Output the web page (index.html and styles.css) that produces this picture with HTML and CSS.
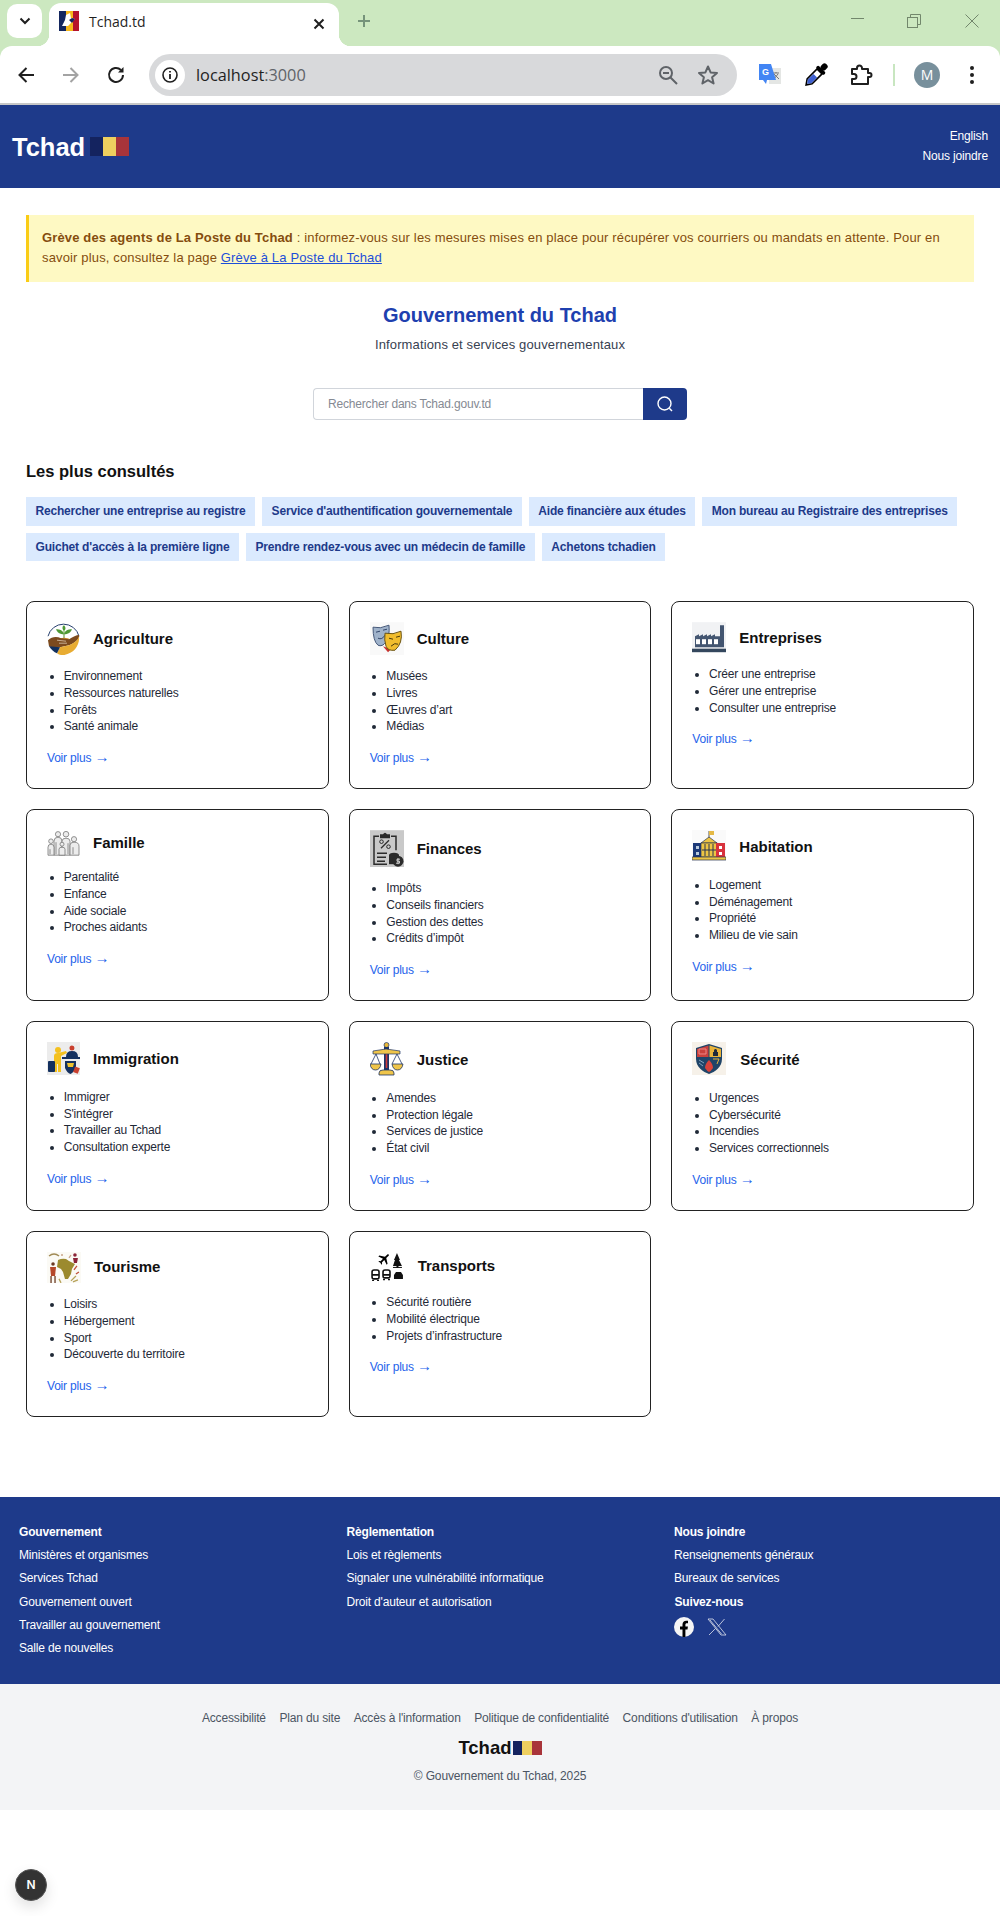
FILE: index.html
```html
<!DOCTYPE html>
<html lang="fr">
<head>
<meta charset="utf-8">
<title>Tchad.td</title>
<link rel="stylesheet" href="styles.css">
</head>
<body>
<div class="chrome">
  <div class="tabstrip">
    <div class="tabsearch"><svg width="14" height="10" viewBox="0 0 14 10"><path d="M2.500 2.500L7 7L11.500 2.500" fill="none" stroke="#1f1f1f" stroke-width="2"/></svg></div>
    <div class="tab">
      <svg class="favicon" width="20" height="20" viewBox="0 0 20 20"><rect width="7" height="20" fill="#14275f"/><rect x="7" width="7" height="20" fill="#f6b81c"/><rect x="14" width="6" height="20" fill="#b5122c"/><path d="M7 4L11 2L12 7L16 8L12 12L9 15L3 15L6 9Z" fill="#fff"/><path d="M10 9L13 7L16 8L13 12Z" fill="#14275f"/></svg>
      <span class="tabtitle">Tchad.td</span>
      <svg class="tabclose" width="12" height="12" viewBox="0 0 12 12"><path d="M1.500 1.500L10.500 10.500M10.500 1.500L1.500 10.500" stroke="#1f1f1f" stroke-width="2"/></svg>
    </div>
    <svg class="newtab" width="14" height="14" viewBox="0 0 14 14"><path d="M7 1V13M1 7H13" stroke="#75937a" stroke-width="2"/></svg>
    <svg class="winctl" width="130" height="16" viewBox="0 0 130 16"><g fill="none" stroke="#72876c" stroke-width="1"><path d="M1 5.500H14"/><rect x="57.500" y="4.500" width="10" height="10"/><path d="M60.500 4.500V1.500H70.500V11.500H67.500"/><path d="M115.500 1.500L128.500 14.500M128.500 1.500L115.500 14.500"/></g></svg>
  </div>
  <div class="toolbar">
    <svg class="tb" width="24" height="24" viewBox="0 0 24 24"><path d="M20 12H6M12.500 5L5.500 12L12.500 19" fill="none" stroke="#1f1f1f" stroke-width="2"/></svg>
    <svg class="tb" width="24" height="24" viewBox="0 0 24 24"><path d="M4 12H18M11.500 5L18.500 12L11.500 19" fill="none" stroke="#a3a3a3" stroke-width="2"/></svg>
    <svg class="tb" width="24" height="24" viewBox="0 0 24 24"><path d="M19 12A7 7 0 1 1 16.900 7" fill="none" stroke="#1f1f1f" stroke-width="2"/><path d="M19.500 4V9.500H14Z" fill="#1f1f1f"/></svg>
    <div class="omnibox">
      <div class="infobtn"><svg width="18" height="18" viewBox="0 0 18 18"><circle cx="9" cy="9" r="7" fill="none" stroke="#1f1f1f" stroke-width="1.600"/><path d="M9 8V13M9 5V6.600" stroke="#1f1f1f" stroke-width="1.800"/></svg></div>
      <span class="url">localhost<span class="port">:3000</span></span>
      <div class="omni-icons">
        <svg width="24" height="24" viewBox="0 0 24 24"><circle cx="10" cy="10" r="6" fill="none" stroke="#5f6368" stroke-width="2"/><path d="M14.500 14.500L21 21M7 10H13" stroke="#5f6368" stroke-width="2"/></svg>
        <svg width="24" height="24" viewBox="0 0 24 24"><path d="M12 3.500L14.600 9.400L21 10L16.100 14.200L17.600 20.500L12 17.200L6.400 20.500L7.900 14.200L3 10L9.400 9.400Z" fill="none" stroke="#5f6368" stroke-width="2" stroke-linejoin="round"/></svg>
      </div>
    </div>
    <svg class="ext-first" width="24" height="24" viewBox="0 0 24 24"><rect x="11" y="5" width="12" height="16" fill="#e4e6e4"/><path d="M15 10H21M18 9V10M16 16L20 11M16 11L21 16" stroke="#777" fill="none"/><path d="M1 1H13L18 17H9L8 21L5 17H1Z" fill="#4285f4"/><text class="gt" x="4" y="12">G</text></svg>
    <svg class="ext" width="24" height="24" viewBox="0 0 24 24"><g transform="rotate(45 12 12)"><rect x="9" y="-3" width="6" height="7" rx="2.500" fill="#000"/><rect x="6.500" y="3.500" width="11" height="3.500" rx="1.500" fill="#000"/><path d="M8.500 7H15.500V21L12 26L8.500 21Z" fill="#fff" stroke="#000" stroke-width="1.600"/><path d="M9.500 13H14.500V21L12 24.500L9.500 21Z" fill="#3d5fd0"/></g></svg>
    <svg class="ext2" width="24" height="24" viewBox="0 0 24 24"><path d="M3 6H8V5A2.500 2.500 0 0 1 13 5V6H19V10H20.500A2 2 0 0 1 20.500 14H19V21H3V16H5A2.500 2.500 0 0 0 5 11H3Z" fill="none" stroke="#1f1f1f" stroke-width="2" stroke-linejoin="round"/></svg>
    <span class="tbsep"></span>
    <span class="avatar">M</span>
    <svg class="kebab" width="24" height="24" viewBox="0 0 24 24"><circle cx="12" cy="5" r="2" fill="#1f1f1f"/><circle cx="12" cy="12" r="2" fill="#1f1f1f"/><circle cx="12" cy="19" r="2" fill="#1f1f1f"/></svg>
  </div>
</div>

<header class="site-header">
  <a class="logo" href="#"><span class="logo-text">Tchad</span><span class="flag"><i class="f1"></i><i class="f2"></i><i class="f3"></i></span></a>
  <nav class="header-nav"><a href="#">English</a><a href="#">Nous joindre</a></nav>
</header>

<main class="main">
  <div class="alert"><strong>Grève des agents de La Poste du Tchad</strong> : informez-vous sur les mesures mises en place pour récupérer vos courriers ou mandats en attente. Pour en savoir plus, consultez la page <a href="#">Grève à La Poste du Tchad</a></div>

  <h1 class="title">Gouvernement du Tchad</h1>
  <p class="subtitle">Informations et services gouvernementaux</p>

  <form class="search">
    <input class="search-input" type="text" placeholder="Rechercher dans Tchad.gouv.td">
    <button class="search-btn" type="button" aria-label="Rechercher"><svg width="18" height="18" viewBox="0 0 18 18"><circle cx="8.500" cy="8.500" r="6.500" fill="none" stroke="#fff" stroke-width="1.400"/><path d="M13.300 13.300L16 16" stroke="#fff" stroke-width="1.400"/></svg></button>
  </form>

  <h2 class="section-title">Les plus consultés</h2>
  <div class="tags">
    <a href="#">Rechercher une entreprise au registre</a>
    <a href="#">Service d'authentification gouvernementale</a>
    <a href="#">Aide financière aux études</a>
    <a href="#">Mon bureau au Registraire des entreprises</a>
    <a href="#">Guichet d'accès à la première ligne</a>
    <a href="#">Prendre rendez-vous avec un médecin de famille</a>
    <a href="#">Achetons tchadien</a>
  </div>

  <section class="grid">
    <article class="card">
      <div class="card-head">
        <svg width="33" height="33.400" viewBox="0 0 33 33"><path d="M1 14A16 16 0 0 1 32 14" fill="none" stroke="#27406e"/><path d="M17 17V9" stroke="#5a8f2a"/><path d="M17 12C13 12 10 10 9 7C13 7 16 8 17 12ZM17 12C18 8 21 7 25 7C24 10 21 12 17 12ZM17 9C15 7 15 4 17 3C19 5 19 7 17 9Z" fill="#4f9a35"/><ellipse cx="17" cy="17" rx="5" ry="1.500" fill="#c98a2b"/><path d="M1 18C5 14 10 14 14 16L22 17C26 15 30 12 32 13C33 17 27 21 22 23L13 25L7 26L2 24Z" fill="#7c4a1e"/><path d="M10 18L19 19M12 21L20 21" stroke="#e9d9c3" stroke-width=".7"/><path d="M32 14C33 24 26 32 16 33C14 33 12 32.500 10 31L13 25L22 23C27 21 31 18 32 14Z" fill="#e8ac32"/><path d="M2 24L13 25L10 31C7 30 4 27 2 24Z" fill="#12305e"/></svg>
        <h3>Agriculture</h3>
      </div>
      <ul><li>Environnement</li><li>Ressources naturelles</li><li>Forêts</li><li>Santé animale</li></ul>
      <a class="more" href="#">Voir plus <span class="arrow">→</span></a>
    </article>

    <article class="card">
      <div class="card-head">
        <svg width="34" height="33.400" viewBox="0 0 34 33"><rect width="34" height="33" fill="#f9f9f9"/><path d="M3 5Q10 7 19 3Q20 14 16 20Q12 25 8 23Q3 19 3 5Z" fill="#9fb2ca" stroke="#46597a"/><path d="M6 10L10 9M13 8L17 7M8 16Q12 18 15 13" fill="none" stroke="#33466a"/><path d="M13 24L18 30L21 27Z" fill="#c8302e"/><path d="M15 11Q23 13 31 9Q33 21 25 28Q18 29 16 24Q14 18 15 11Z" fill="#f1bd2e" stroke="#6b5412"/><path d="M19 16L23 17M26 15L30 14M21 24Q25 20 28 22" fill="none" stroke="#4b3a0b"/></svg>
        <h3>Culture</h3>
      </div>
      <ul><li>Musées</li><li>Livres</li><li>Œuvres d’art</li><li>Médias</li></ul>
      <a class="more" href="#">Voir plus <span class="arrow">→</span></a>
    </article>

    <article class="card">
      <div class="card-head">
        <svg width="34" height="31.400" viewBox="0 0 34 31"><rect width="34" height="30" fill="#f1f2f4"/><rect y="26.500" width="34" height="3.500" fill="#34475d"/><path d="M3 25V14L7 12V14L11 12V14L15 12V14L19 12V14L23 12V14H28V3H32V25Z" fill="#435570"/><rect x="4" y="17" width="4" height="5" fill="#fff"/><rect x="10" y="17" width="4" height="5" fill="#fff"/><rect x="16" y="17" width="4" height="5" fill="#fff"/><rect x="22" y="17" width="4" height="5" fill="#fff"/></svg>
        <h3>Entreprises</h3>
      </div>
      <ul><li>Créer une entreprise</li><li>Gérer une entreprise</li><li>Consulter une entreprise</li></ul>
      <a class="more" href="#">Voir plus <span class="arrow">→</span></a>
    </article>

    <article class="card">
      <div class="card-head">
        <svg width="33" height="26.400" viewBox="0 0 33 26"><g fill="#ececec" stroke="#777" stroke-width=".8"><circle cx="11" cy="4" r="2.600"/><circle cx="19" cy="4" r="2.800"/><path d="M7 25V11Q7 7 11 7Q15 7 15 11V25Z"/><path d="M15 25V11Q15 8 19 8Q23 8 23 11V25Z"/><circle cx="4" cy="11" r="2.300"/><circle cx="27" cy="9" r="2.600"/><path d="M1 25V17Q1 14 4 14Q7 14 7 17V25Z"/><path d="M23 25V15Q23 12 27 12Q32 12 32 16V25Z"/><circle cx="15" cy="14" r="2"/><path d="M12 25V19Q12 17 15 17Q18 17 18 19V25Z"/><path d="M9 12V24M21 13V24M26 17V24M3 19V24" fill="none"/></g></svg>
        <h3>Famille</h3>
      </div>
      <ul><li>Parentalité</li><li>Enfance</li><li>Aide sociale</li><li>Proches aidants</li></ul>
      <a class="more" href="#">Voir plus <span class="arrow">→</span></a>
    </article>

    <article class="card">
      <div class="card-head">
        <svg width="34" height="37.400" viewBox="0 0 34 37"><rect width="34" height="37" fill="#c9c9c9"/><path d="M9 6H4V34H17M21 6H26V20" fill="none" stroke="#2b2b2b" stroke-width="1.500"/><path d="M10 8V4H13Q15 1 17 4H20V8Z" fill="#2b2b2b"/><path d="M11 18L19 10" stroke="#2b2b2b" stroke-width="1.300"/><circle cx="11.500" cy="11.500" r="1.800" fill="none" stroke="#2b2b2b"/><circle cx="18.500" cy="16.500" r="1.800" fill="none" stroke="#2b2b2b"/><path d="M7 23H17M7 27H16M7 31H15" stroke="#2b2b2b" stroke-width="1.500"/><g fill="#2b2b2b"><ellipse cx="24" cy="25" rx="5" ry="2.500"/><rect x="19" y="25" width="10" height="9"/><circle cx="28" cy="31" r="5.500"/></g><path d="M28 28V34M30 29H27V31H29.500V33H26" fill="none" stroke="#ddd" stroke-width=".9"/></svg>
        <h3>Finances</h3>
      </div>
      <ul><li>Impôts</li><li>Conseils financiers</li><li>Gestion des dettes</li><li>Crédits d’impôt</li></ul>
      <a class="more" href="#">Voir plus <span class="arrow">→</span></a>
    </article>

    <article class="card">
      <div class="card-head">
        <svg width="34" height="34" viewBox="0 0 34 34"><rect width="34" height="31" fill="#fafafa"/><path d="M17 1V8" stroke="#555"/><path d="M17 1H22V5H17Z" fill="#e5b945"/><path d="M17 7L25 13H9Z" fill="#edc544" stroke="#2a3550" stroke-width=".7"/><rect x="1" y="13" width="9" height="14" fill="#1d3a78"/><rect x="9" y="13" width="16" height="14" fill="#edc544" stroke="#2a3550" stroke-width=".7"/><rect x="24" y="13" width="9" height="14" fill="#d8323d"/><path d="M13 14V26M17 14V26M21 14V26M10 20H24" stroke="#2a3550"/><g fill="#bcd"><rect x="4" y="16" width="3" height="3"/><rect x="4" y="22" width="3" height="3"/></g><g fill="#fff"><rect x="27" y="16" width="3" height="3"/><rect x="27" y="22" width="3" height="3"/></g><rect y="27" width="34" height="3" fill="#edc544" stroke="#2a3550" stroke-width=".7"/></svg>
        <h3>Habitation</h3>
      </div>
      <ul><li>Logement</li><li>Déménagement</li><li>Propriété</li><li>Milieu de vie sain</li></ul>
      <a class="more" href="#">Voir plus <span class="arrow">→</span></a>
    </article>

    <article class="card">
      <div class="card-head">
        <svg width="33" height="33.700" viewBox="0 0 33 33.700"><rect width="33" height="33" fill="#ececec"/><circle cx="11" cy="8" r="3" fill="#f4c11f"/><path d="M7 30V14Q7 11 11 11L19 9L20 11L14 14V30H11V22H10V30Z" fill="#f4c11f"/><rect x="1" y="19" width="7" height="11" rx="1" fill="#14305f"/><circle cx="25" cy="6" r="2.500" fill="#c9402e"/><path d="M19 15Q19 9 25 9Q31 9 31 15Z" fill="#14305f"/><rect x="15" y="15" width="18" height="2" fill="#14305f"/><path d="M18 19H29V26Q26 31 23.500 32Q20 31 18 26Z" fill="#14305f"/><path d="M20 21H27L26 25H21Z" fill="#efc22e"/><rect x="27" y="25" width="5" height="6" fill="#c9402e" transform="rotate(20 29 28)"/></svg>
        <h3>Immigration</h3>
      </div>
      <ul><li>Immigrer</li><li>S'intégrer</li><li>Travailler au Tchad</li><li>Consultation experte</li></ul>
      <a class="more" href="#">Voir plus <span class="arrow">→</span></a>
    </article>

    <article class="card">
      <div class="card-head">
        <svg width="34" height="34.700" viewBox="0 0 34 34.700"><circle cx="16.500" cy="3" r="2.500" fill="#e8b93a" stroke="#1d3366" stroke-width=".7"/><rect x="14" y="5" width="5" height="23" fill="#1d3366"/><rect x="15.700" y="9" width="1.600" height="17" fill="#d03a3a"/><path d="M3 9L16 7L30 9V12H3Z" fill="#efc54a" stroke="#1d3366" stroke-width=".7"/><path d="M6 12L1 22M6 12L10 22M27 12L22 22M27 12L32 22" stroke="#1d3366" stroke-width=".8"/><path d="M0 22H11Q10 28 5.500 28Q1 28 0 22ZM22 22H33Q32 28 27.500 28Q23 28 22 22Z" fill="#efc54a" stroke="#1d3366" stroke-width=".8"/><path d="M9 33V31Q9 28 13 28H20Q24 28 24 31V33Z" fill="#efc54a" stroke="#1d3366" stroke-width=".8"/></svg>
        <h3>Justice</h3>
      </div>
      <ul><li>Amendes</li><li>Protection légale</li><li>Services de justice</li><li>État civil</li></ul>
      <a class="more" href="#">Voir plus <span class="arrow">→</span></a>
    </article>

    <article class="card">
      <div class="card-head">
        <svg class="mr14" width="34" height="34.700" viewBox="0 0 34 34.700"><rect width="34" height="33" fill="#f6f1e9"/><path d="M17 2L30 6V17C30 25 23 30 17 32C11 30 4 25 4 17V6Z" fill="#1f4468"/><path d="M5 7L16.500 3.500V15H5Z" fill="#c9403c"/><path d="M17.500 3.500L29 7V15H17.500Z" fill="#e9b43a"/><path d="M7 7H14V12H7Z" fill="none" stroke="#e88"/><path d="M21 10H26V14H21ZM22 10V8Q23.500 6 25 8V10" fill="#1f2a3a"/><path d="M17 18Q21 22 21 26Q19 29 17 30Q15 29 13 26Q13 22 17 18Z" fill="#d8423a"/><path d="M21 17H27L25 22" fill="none" stroke="#e9b43a"/><path d="M7 18L12 21M7 21L11 24" stroke="#7fa0bb"/></svg>
        <h3>Sécurité</h3>
      </div>
      <ul><li>Urgences</li><li>Cybersécurité</li><li>Incendies</li><li>Services correctionnels</li></ul>
      <a class="more" href="#">Voir plus <span class="arrow">→</span></a>
    </article>

    <article class="card">
      <div class="card-head">
        <svg width="34" height="31.900" viewBox="0 0 34 32"><rect width="34" height="32" fill="#fbfaf5"/><path d="M11 8Q15 6 19 7L22 9L26 11L28 12L25 17L24 22L21 27H18L16 20L14 17L10 15Z" fill="#9c8a2e"/><path d="M2 4Q7 0 12 4" fill="none" stroke="#a08a55" stroke-width="1.500"/><circle cx="6" cy="12" r="1.800" fill="#6b3a22"/><path d="M3 15H9L8 24H4Z" fill="#b5482a"/><path d="M4 24V31M8 24V31" stroke="#6b3a22" stroke-width="1.300"/><circle cx="28" cy="3" r="1.800" fill="#8c2438"/><path d="M26 6H31L30 11H27Z" fill="#8c2438"/><path d="M22 6L24 3M14 3H16" stroke="#c9a58a" stroke-width="1.300"/><path d="M27 18L30 14M29 22L32 20" stroke="#c0503a" stroke-width="1.300"/><path d="M24 29L29 24M12 27L14 31M26 30L31 28" stroke="#b7a25a" stroke-width="1.300"/></svg>
        <h3>Tourisme</h3>
      </div>
      <ul><li>Loisirs</li><li>Hébergement</li><li>Sport</li><li>Découverte du territoire</li></ul>
      <a class="more" href="#">Voir plus <span class="arrow">→</span></a>
    </article>

    <article class="card">
      <div class="card-head">
        <svg width="35" height="29.900" viewBox="0 0 35 30"><path transform="translate(14.500 -3.500) rotate(45) scale(.62)" d="M21 16v-2l-8-5V3.500c0-.830-.670-1.500-1.500-1.500S10 2.670 10 3.500V9l-8 5v2l8-2.500V19l-2 1.500V22l3.500-1 3.500 1v-1.500L13 19v-5.500l8 2.500z" fill="#000"/><path d="M27 1L30 8L29 8L32 14L23 14L25 8L24 8Z" fill="#111"/><rect x="26.500" y="14" width="2" height="2" fill="#111"/><path d="M23 15.500H32" stroke="#111"/><g fill="none" stroke="#111" stroke-width="1.600"><rect x="2" y="18" width="7" height="9" rx="2"/><rect x="13" y="18" width="7" height="8" rx="2"/><path d="M2 23H9M13 23H20"/></g><path d="M2 28.500H4M7 28.500H9M13 27.500H15M18 27.500H20" stroke="#111" stroke-width="1.500"/><path d="M24 27V23L26 20H31L33 23V27Z" fill="#111"/></svg>
        <h3>Transports</h3>
      </div>
      <ul><li>Sécurité routière</li><li>Mobilité électrique</li><li>Projets d’infrastructure</li></ul>
      <a class="more" href="#">Voir plus <span class="arrow">→</span></a>
    </article>
  </section>
</main>

<footer>
  <div class="footer-top">
    <div class="fcol">
      <strong>Gouvernement</strong>
      <a href="#">Ministères et organismes</a>
      <a href="#">Services Tchad</a>
      <a href="#">Gouvernement ouvert</a>
      <a href="#">Travailler au gouvernement</a>
      <a href="#">Salle de nouvelles</a>
    </div>
    <div class="fcol">
      <strong>Règlementation</strong>
      <a href="#">Lois et règlements</a>
      <a href="#">Signaler une vulnérabilité informatique</a>
      <a href="#">Droit d'auteur et autorisation</a>
    </div>
    <div class="fcol">
      <strong>Nous joindre</strong>
      <a href="#">Renseignements généraux</a>
      <a href="#">Bureaux de services</a>
      <strong class="follow">Suivez-nous</strong>
      <div class="social">
        <svg width="20" height="20" viewBox="0 0 20 20"><circle cx="10" cy="10" r="10" fill="#f5f5f5"/><path d="M8.500 20V12.500H6V9.500H8.500V7.500C8.500 5 10 3.700 12.200 3.700C13.200 3.700 14 3.800 14 3.800V6.200H12.900C11.700 6.200 11.400 6.900 11.400 7.700V9.500H13.900L13.500 12.500H11.400V20Z" fill="#000"/></svg>
        <svg width="20" height="20" viewBox="0 0 20 20"><path d="M1 2H6L19 18H14ZM3 3L14.500 17M17.500 2L11 9.500M8.500 11.500L2 18" fill="none" stroke="#dfe3ee" stroke-width=".8"/></svg>
      </div>
    </div>
  </div>
  <div class="footer-bottom">
    <nav class="legal">
      <a href="#">Accessibilité</a>
      <a href="#">Plan du site</a>
      <a href="#">Accès à l'information</a>
      <a href="#">Politique de confidentialité</a>
      <a href="#">Conditions d'utilisation</a>
      <a href="#">À propos</a>
    </nav>
    <div class="logo logo-small"><span class="logo-text">Tchad</span><span class="flag"><i class="f1"></i><i class="f2"></i><i class="f3"></i></span></div>
    <p class="copy">© Gouvernement du Tchad, 2025</p>
  </div>
</footer>

<div class="next-badge">N</div>
</body>
</html>
```

FILE: styles.css
```css
* { box-sizing: border-box; }
html, body { margin: 0; padding: 0; }
body {
  min-height: 1916px;
  background: #fff;
  color: #111827;
  font-family: "Liberation Sans", Arial, sans-serif;
  position: relative;
}
a { color: inherit; text-decoration: none; }

/* browser chrome */
.chrome { height: 105px; background: #cce8c0; }
.tabstrip { height: 46px; display: flex; align-items: flex-start; }
.tabsearch {
  width: 35px; height: 34px; margin: 4px 0 0 7px; background: #fff; border-radius: 10px;
  display: flex; align-items: center; justify-content: center;
}
.tab {
  position: relative; width: 290px; height: 43px; margin: 3px 0 0 7px;
  background: #fff; border-radius: 12px 12px 0 0;
  display: flex; align-items: flex-start; padding: 8px 14px 0 10px;
}
.tab::before, .tab::after {
  content: ""; position: absolute; bottom: 0; width: 12px; height: 12px;
}
.tab::before { left: -12px; background: radial-gradient(circle at 0 0, transparent 12px, #fff 12.5px); }
.tab::after { right: -12px; background: radial-gradient(circle at 100% 0, transparent 12px, #fff 12.5px); }
.favicon { flex: none; }
.tabtitle { margin: 2px 0 0 10px; font: 14px/18px "Open Sans", sans-serif; color: #1f1f1f; }
.tabclose { margin: 7px 0 0 auto; }
.newtab { margin: 14px 0 0 18px; }
.winctl { margin: 13px 20px 0 auto; }
.toolbar {
  height: 59px; padding: 1px 16px 0 14px; background: #fff;
  border-radius: 12px 12px 0 0; border-bottom: 2px solid #c7c7c7;
  display: flex; align-items: center;
}
.tb { flex: none; margin-right: 21px; }
.omnibox {
  flex: none; width: 588px; height: 42px; background: #d8d9db; border-radius: 21px;
  display: flex; align-items: center; padding: 0 17px 0 6px;
}
.infobtn {
  width: 30px; height: 30px; border-radius: 50%; background: #fff;
  display: flex; align-items: center; justify-content: center;
}
.url { margin-left: 11px; font: 16.300px/22px "Open Sans", sans-serif; color: #1f1f1f; }
.port { color: #5f6368; }
.omni-icons { margin-left: auto; display: flex; gap: 16px; }
.ext-first { flex: none; margin-left: 21px; }
.ext { flex: none; margin-left: 22px; }
.ext2 { flex: none; margin-left: 21px; }
.gt { font: bold 9px "Liberation Sans", sans-serif; fill: #fff; }
.tbsep { flex: none; width: 2px; height: 22px; margin-left: 20px; background: #c8e6c0; }
.avatar {
  flex: none; width: 26px; height: 26px; margin-left: 19px; border-radius: 50%; background: #78909c; color: #fff;
  font: 14px/26px "Open Sans", sans-serif; text-align: center;
}
.kebab { flex: none; margin-left: 20px; }

/* header */
.site-header {
  height: 83px; padding: 0 12px; background: #1e3a8a; color: #fff;
  display: flex; align-items: center; justify-content: space-between;
}
.logo { display: flex; align-items: center; gap: 5px; }
.logo-text { font-size: 25.500px; line-height: 28px; font-weight: 700; color: #fff; }
.flag { display: flex; height: 19px; }
.flag i { display: block; width: 13px; }
.f1 { background: #14235f; }
.f2 { background: #eecf5f; }
.f3 { background: #a8343a; }
.header-nav { display: flex; flex-direction: column; align-items: flex-end; margin-bottom: 1px; font-size: 12px; line-height: 20px; letter-spacing: -.15px; }

/* main */
.main { padding: 27px 26px 80px; }
.alert {
  padding: 12.500px 13px 14.500px; background: #fef9c3; border-left: 3px solid #facc15;
  color: #854d0e; font-size: 13px; line-height: 20px; letter-spacing: .15px;
}
.alert a { color: #1d4ed8; text-decoration: underline; }
.title { margin: 19px 0 0; text-align: center; font-size: 20px; line-height: 28px; font-weight: 700; color: #1e40af; }
.subtitle { margin: 6px 0 0; text-align: center; font-size: 13px; line-height: 20px; letter-spacing: .13px; color: #374151; }
.search { width: 374px; height: 32px; margin: 33px auto 0; display: flex; }
.search-input {
  flex: 1; min-width: 0; height: 32px; padding: 0 14px; border: 1px solid #d1d5db; border-right: 0;
  border-radius: 4px 0 0 4px; font: 12px "Liberation Sans", sans-serif; letter-spacing: -.18px; outline: 0;
}
.search-input::placeholder { color: #858a93; opacity: 1; }
.search-btn {
  width: 44px; height: 32px; padding: 0; border: 0; border-radius: 0 4px 4px 0; background: #1e3a8a;
  display: flex; align-items: center; justify-content: center;
}
.section-title { margin: 39px 0 0; font-size: 16.500px; line-height: 24px; font-weight: 700; color: #111; }
.tags { margin-top: 14px; display: flex; flex-wrap: wrap; gap: 7px; }
.tags a {
  padding: 6px 9.500px; background: #dbeafe; color: #1e3a8a;
  font-size: 12px; line-height: 16.500px; font-weight: 700; letter-spacing: -.18px;
}
.grid { margin-top: 40px; display: grid; grid-template-columns: repeat(3, 1fr); gap: 20px; }
.card { padding: 20px; border: 1px solid #222; border-radius: 8px; background: #fff; }
.card-head { display: flex; align-items: center; gap: 13px; }
.card-head svg { flex: none; }
.card-head svg.mr14 { margin-right: 1px; }
.card-head h3 { margin: 0; font-size: 15px; line-height: 20px; font-weight: 700; color: #111; }
.card ul { margin: 13px 0 0; padding-left: 16.700px; list-style: disc; font-size: 12px; line-height: 16.670px; letter-spacing: -.18px; color: #1f2937; }
.more { display: block; margin-top: 14px; padding-bottom: 1px; font-size: 12px; line-height: 18px; letter-spacing: -.2px; color: #2563eb; }
.arrow { font-size: 15px; line-height: 15px; }

/* footer */
.footer-top { height: 187px; padding: 27px 0 0 19px; background: #1e3a8a; color: #fff; display: grid; grid-template-columns: repeat(3, 327.500px); font-size: 12px; line-height: 16px; letter-spacing: -.18px; }
.fcol { display: flex; flex-direction: column; gap: 7.200px; align-items: flex-start; }
.follow { padding-left: .5px; }
.social { display: flex; gap: 13px; }
.footer-bottom { height: 126px; padding-top: 26px; background: #f3f4f6; display: flex; flex-direction: column; align-items: center; }
.legal { display: flex; gap: 13.500px; font-size: 12px; line-height: 16px; letter-spacing: -.16px; color: #4b5563; }
.logo-small { margin-top: 12px; gap: 1px; }
.logo-small .logo-text { font-size: 18.500px; line-height: 20px; color: #111; }
.logo-small .flag { height: 14px; }
.logo-small .flag i { width: 9.700px; }
.copy { margin: 10px 0 0; font-size: 12px; line-height: 16px; letter-spacing: -.15px; color: #4b5563; }

.next-badge {
  position: absolute; left: 15px; top: 1869px; width: 32px; height: 32px; border-radius: 50%;
  background: #333; border: 1px solid #555; color: #fff; box-shadow: 0 6px 14px rgba(0,0,0,.12);
  font: 600 12px/30px Inter, sans-serif; text-align: center;
}
```
